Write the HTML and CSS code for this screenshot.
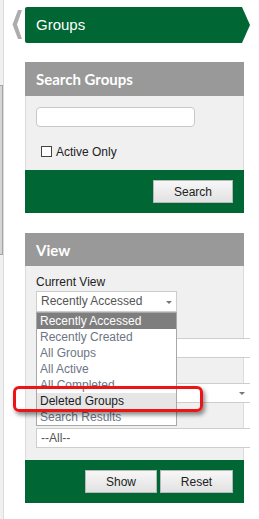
FILE: index.html
```html
<!DOCTYPE html>
<html lang="en">

<head>
    <meta charset="UTF-8">
    <meta name="viewport" content="width=device-width, initial-scale=1.0">
    <title>Groups</title>
    <link rel="stylesheet" href="styles.css">
</head>

<body>
    <div class="page">
        <!-- left rail with scroll thumb -->
        <div class="rail">
            <div class="thumb"></div>
        </div>

        <div class="main">
            <div class="title-bar">
                <svg class="back" width="13" height="36" viewBox="0 0 13 36">
                    <path d="M10 3 H6 L0.5 17.5 L6 32 H10 L5 17.5 Z" fill="#adadad" />
                </svg>
                <div class="banner">Groups</div>
            </div>

            <!-- Search Groups -->
            <div class="panel">
                <div class="panel-head">Search Groups</div>
                <div class="panel-body search-body">
                    <input class="text-input" type="text">
                    <label class="check"><input type="checkbox">Active Only</label>
                </div>
                <div class="panel-foot">
                    <button class="btn btn-search">Search</button>
                </div>
            </div>

            <!-- View -->
            <div class="panel view-panel">
                <div class="panel-head">View</div>
                <div class="panel-body view-body">
                    <div class="field first">
                        <div class="field-label">Current View</div>
                        <div class="select-wrap">
                            <div class="select short">Recently Accessed<span class="caret"></span></div>
                            <ul class="dropdown">
                                <li class="active">Recently Accessed</li>
                                <li>Recently Created</li>
                                <li>All Groups</li>
                                <li>All Active</li>
                                <li>All Completed</li>
                                <li class="hover">Deleted Groups</li>
                                <li>Search Results</li>
                            </ul>
                            <div class="callout"></div>
                        </div>
                    </div>
                    <!-- fields covered by the open list -->
                    <div class="field">
                        <div class="field-label"></div>
                        <div class="select"></div>
                    </div>
                    <div class="field">
                        <div class="field-label"></div>
                        <div class="select"><span class="caret"></span></div>
                    </div>
                    <div class="field">
                        <div class="field-label"></div>
                        <div class="select last">--All--</div>
                    </div>
                </div>
                <div class="panel-foot">
                    <button class="btn btn-show">Show</button>
                    <button class="btn btn-reset">Reset</button>
                </div>
            </div>
        </div>
    </div>
</body>

</html>
```

FILE: styles.css
```css
body {
    margin: 0;
    font-family: "Liberation Sans", Arial, sans-serif;
    background-color: #fff;
}

.page {
    display: flex;
    min-height: 519px;
}

.rail {
    width: 3px;
    background-color: #f0f0f0;
    border-right: 1px solid #dcdcdc;
}

.thumb {
    margin-top: 85px;
    height: 170px;
    box-sizing: border-box;
    background-color: #d6d6d6;
    border: 1px solid #a4a4a4;
    border-left: 0;
}

.main {
    padding-left: 8px;
    padding-top: 7px;
}

.title-bar {
    display: flex;
    height: 36px;
}

.back {
    display: block;
}

.banner {
    width: 214px;
    height: 36px;
    padding-left: 11px;
    line-height: 36px;
    font-size: 15px;
    color: #fff;
    background-color: #006633;
    border-radius: 2px 0 0 2px;
    clip-path: polygon(0 0, 217px 0, 225px 50%, 217px 100%, 0 100%);
}

.panel {
    width: 219px;
    margin-left: 13px;
    margin-top: 19px;
}

.view-panel {
    margin-top: 20px;
}

.panel-head {
    height: 34px;
    line-height: 35px;
    padding-left: 11px;
    background-color: #999;
    color: #fff;
    font-family: Lato, "Open Sans", sans-serif;
    font-weight: bold;
    font-size: 15px;
}

.view-panel .panel-head {
    height: 33px;
    line-height: 34px;
}

.panel-body {
    background-color: #f0f0f0;
    border-left: 1px solid #dcdcdc;
    border-right: 1px solid #dcdcdc;
    padding: 0 10px;
}

.search-body {
    padding-top: 11px;
    padding-bottom: 11px;
}

.text-input {
    display: block;
    width: 159px;
    height: 20px;
    margin: 0;
    box-sizing: border-box;
    border: 1px solid #c8c8c8;
    border-radius: 4px;
    background-color: #fff;
}

.check {
    display: flex;
    align-items: center;
    gap: 4px;
    height: 15px;
    margin-top: 17px;
    padding-left: 5px;
    font-size: 12px;
    color: #222;
}

.check input {
    appearance: none;
    width: 11px;
    height: 11px;
    margin: 0;
    border: 1px solid #444;
    background-color: #fff;
}

.panel-foot {
    display: flex;
    justify-content: flex-end;
    align-items: center;
    gap: 3px;
    height: 43px;
    padding-right: 11px;
    background-color: #006633;
}

.btn {
    height: 23px;
    padding: 0;
    border: 1px solid #b8b8b8;
    background: linear-gradient(#f7f7f7, #e2e2e2);
    font-family: "Liberation Sans", Arial, sans-serif;
    font-size: 12px;
    color: #222;
}

.btn-search {
    width: 80px;
}

.btn-show {
    width: 72px;
}

.btn-reset {
    width: 73px;
}

.view-body {
    padding-top: 9px;
    padding-bottom: 12px;
}

.field {
    margin-top: 9px;
}

.field.first {
    margin-top: 0;
}

.field:nth-child(2) {
    margin-top: 10px;
}

.field-label {
    height: 15px;
    font-size: 12px;
    line-height: 15px;
    margin-bottom: 1px;
    color: #222;
}

.select-wrap {
    position: relative;
}

.select {
    position: relative;
    height: 20px;
    box-sizing: border-box;
    margin-right: -17px;
    padding-left: 4px;
    border: 1px solid #cdcdcd;
    border-right: 0;
    background-color: #fff;
    font-size: 12px;
    line-height: 18px;
    color: #555;
}

.select.short {
    width: 141px;
    height: 21px;
    line-height: 19px;
    margin-right: 0;
    border-right: 1px solid #cdcdcd;
}

.select.last {
    line-height: 19px;
}

.caret {
    position: absolute;
    right: 5px;
    top: 8px;
    border-top: 3px solid #777;
    border-left: 3px solid transparent;
    border-right: 3px solid transparent;
}

.select.short .caret {
    right: 4px;
    top: 9px;
}

/* open list of the Current View select */
.dropdown {
    position: absolute;
    top: 100%;
    left: 0;
    z-index: 2;
    width: 141px;
    box-sizing: border-box;
    margin: 0;
    padding: 0;
    list-style: none;
    border: 1px solid #a8a8a8;
    background-color: #fff;
}

.dropdown li {
    height: 16px;
    line-height: 16px;
    padding-left: 3px;
    font-size: 12px;
    color: #6d7584;
    white-space: nowrap;
    overflow: hidden;
}

.dropdown li.active {
    background-color: #7e7e7e;
    color: #fff;
}

.dropdown li.hover {
    background-color: #e6e6e6;
    color: #1c1c1c;
}

/* red highlight drawn over the list */
.callout {
    position: absolute;
    left: -23px;
    top: 95px;
    z-index: 3;
    width: 190px;
    height: 26px;
    box-sizing: border-box;
    border: 3px solid #ec1515;
    border-radius: 6px;
    box-shadow: 2px 3px 4px rgba(0, 0, 0, 0.45);
}
```
